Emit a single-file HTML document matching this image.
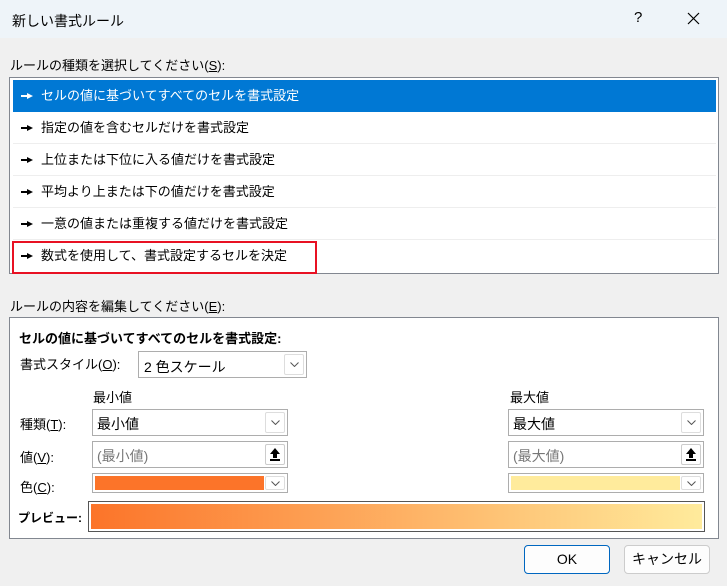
<!DOCTYPE html>
<html><head><meta charset="utf-8"><style>
*{box-sizing:border-box;margin:0;padding:0}
body{width:727px;height:586px;background:#f0f0f0;font-family:"Liberation Sans","Noto Sans CJK JP",sans-serif;font-size:13px;color:#000;position:relative;overflow:hidden}
.a{position:absolute;white-space:nowrap}
.title{left:0;top:0;width:727px;height:38px;background:#eef4f9}
.list{left:9px;top:77px;width:710px;height:197px;background:#fff;border:1px solid #828790}
.row{position:absolute;left:3px;width:703px;height:32px;line-height:32px;padding-left:8px;border-bottom:1px solid #eee}
.row.sel{background:#0078d4;color:#fff;border:none}
.arr{display:inline-block;width:12px;height:6px;margin-right:8px;vertical-align:middle;position:relative;top:-1px}
.panel{left:9px;top:317px;width:710px;height:222px;background:#fff;border:1px solid #828790}
.box{position:absolute;background:#fff;border:1px solid #adadad}
.dd{position:absolute;right:2px;top:2px;width:20px;bottom:2px;border:1px solid #ddd;border-radius:2px;background:#fff;display:flex;align-items:center;justify-content:center}
.btn{position:absolute;top:545px;width:86px;height:29px;border:1px solid #ccc;border-radius:4px;background:#fdfdfd;text-align:center;line-height:27px;font-size:14px}
u{text-decoration:underline}
</style></head><body>
<div class="a title"></div>
<div class="a" style="left:12px;top:11px;font-size:14px">新しい書式ルール</div>
<div class="a" style="left:634px;top:9px;font-size:15px">?</div>
<svg class="a" style="left:687px;top:12px" width="13" height="13"><path d="M1 1L12 12M12 1L1 12" stroke="#000" stroke-width="1.2"/></svg>
<div class="a" style="left:10px;top:55px">ルールの種類を選択してください(<u>S</u>):</div>
<div class="a list">
<div class="row sel" style="top:2px"><svg class="arr"><path d="M0 2H6V0L12 3L6 6V4H0Z" fill="#fff"/></svg>セルの値に基づいてすべてのセルを書式設定</div>
<div class="row" style="top:34px"><svg class="arr"><path d="M0 2H6V0L12 3L6 6V4H0Z"/></svg>指定の値を含むセルだけを書式設定</div>
<div class="row" style="top:66px"><svg class="arr"><path d="M0 2H6V0L12 3L6 6V4H0Z"/></svg>上位または下位に入る値だけを書式設定</div>
<div class="row" style="top:98px"><svg class="arr"><path d="M0 2H6V0L12 3L6 6V4H0Z"/></svg>平均より上または下の値だけを書式設定</div>
<div class="row" style="top:130px"><svg class="arr"><path d="M0 2H6V0L12 3L6 6V4H0Z"/></svg>一意の値または重複する値だけを書式設定</div>
<div class="row" style="top:162px;border:none"><svg class="arr"><path d="M0 2H6V0L12 3L6 6V4H0Z"/></svg>数式を使用して、書式設定するセルを決定</div>
<div style="position:absolute;left:2px;top:163px;width:305px;height:33px;border:2px solid #e81123"></div>
</div>
<div class="a" style="left:10px;top:296px">ルールの内容を編集してください(<u>E</u>):</div>
<div class="a panel"></div>
<div class="a" style="left:19px;top:328px;font-weight:bold">セルの値に基づいてすべてのセルを書式設定:</div>
<div class="a" style="left:20px;top:354px">書式スタイル(<u>O</u>):</div>
<div class="box" style="left:138px;top:351px;width:169px;height:27px"><span style="position:absolute;left:5px;top:5px;font-size:14px">2 色スケール</span><div class="dd"><svg width="9" height="5"><path d="M0.5 0.5L4.5 4.5L8.5 0.5" fill="none" stroke="#555"/></svg></div></div>
<div class="a" style="left:93px;top:387px">最小値</div>
<div class="a" style="left:510px;top:387px">最大値</div>
<div class="a" style="left:20px;top:414px">種類(<u>T</u>):</div>
<div class="a" style="left:20px;top:447px">値(<u>V</u>):</div>
<div class="a" style="left:20px;top:477px">色(<u>C</u>):</div>
<div class="box" style="left:92px;top:409px;width:196px;height:27px"><span style="position:absolute;left:4px;top:4px;font-size:14px">最小値</span><div class="dd"><svg width="9" height="5"><path d="M0.5 0.5L4.5 4.5L8.5 0.5" fill="none" stroke="#555"/></svg></div></div>
<div class="box" style="left:92px;top:441px;width:196px;height:27px"><span style="position:absolute;left:4px;top:4px;color:#777;font-size:14px">(最小値)</span><div class="dd" style="border-color:#ccc"><svg width="10" height="13"><path d="M5 0L10 6H7V10H3V6H0Z M0 11H10V13H0Z"/></svg></div></div>
<div class="box" style="left:92px;top:473px;width:196px;height:20px"><div style="position:absolute;left:2px;top:2px;width:169px;bottom:2px;background:#fc7429"></div><div class="dd"><svg width="9" height="5"><path d="M0.5 0.5L4.5 4.5L8.5 0.5" fill="none" stroke="#555"/></svg></div></div>
<div class="box" style="left:508px;top:409px;width:196px;height:27px"><span style="position:absolute;left:4px;top:4px;font-size:14px">最大値</span><div class="dd"><svg width="9" height="5"><path d="M0.5 0.5L4.5 4.5L8.5 0.5" fill="none" stroke="#555"/></svg></div></div>
<div class="box" style="left:508px;top:441px;width:196px;height:27px"><span style="position:absolute;left:4px;top:4px;color:#777;font-size:14px">(最大値)</span><div class="dd" style="border-color:#ccc"><svg width="10" height="13"><path d="M5 0L10 6H7V10H3V6H0Z M0 11H10V13H0Z"/></svg></div></div>
<div class="box" style="left:508px;top:473px;width:196px;height:20px"><div style="position:absolute;left:2px;top:2px;width:169px;bottom:2px;background:#ffeb9c"></div><div class="dd"><svg width="9" height="5"><path d="M0.5 0.5L4.5 4.5L8.5 0.5" fill="none" stroke="#555"/></svg></div></div>
<div class="a" style="left:18px;top:509px;font-weight:bold;font-size:12px">プレビュー:</div>
<div class="a" style="left:88px;top:501px;width:617px;height:31px;border:1px solid #555;padding:2px;background:#fff"><div style="width:100%;height:100%;background:linear-gradient(to right,#fc7429,#ffeb9c)"></div></div>
<div class="btn" style="left:524px;border:1px solid #0067c0">OK</div>
<div class="btn" style="left:624px">キャンセル</div>
</body></html>
